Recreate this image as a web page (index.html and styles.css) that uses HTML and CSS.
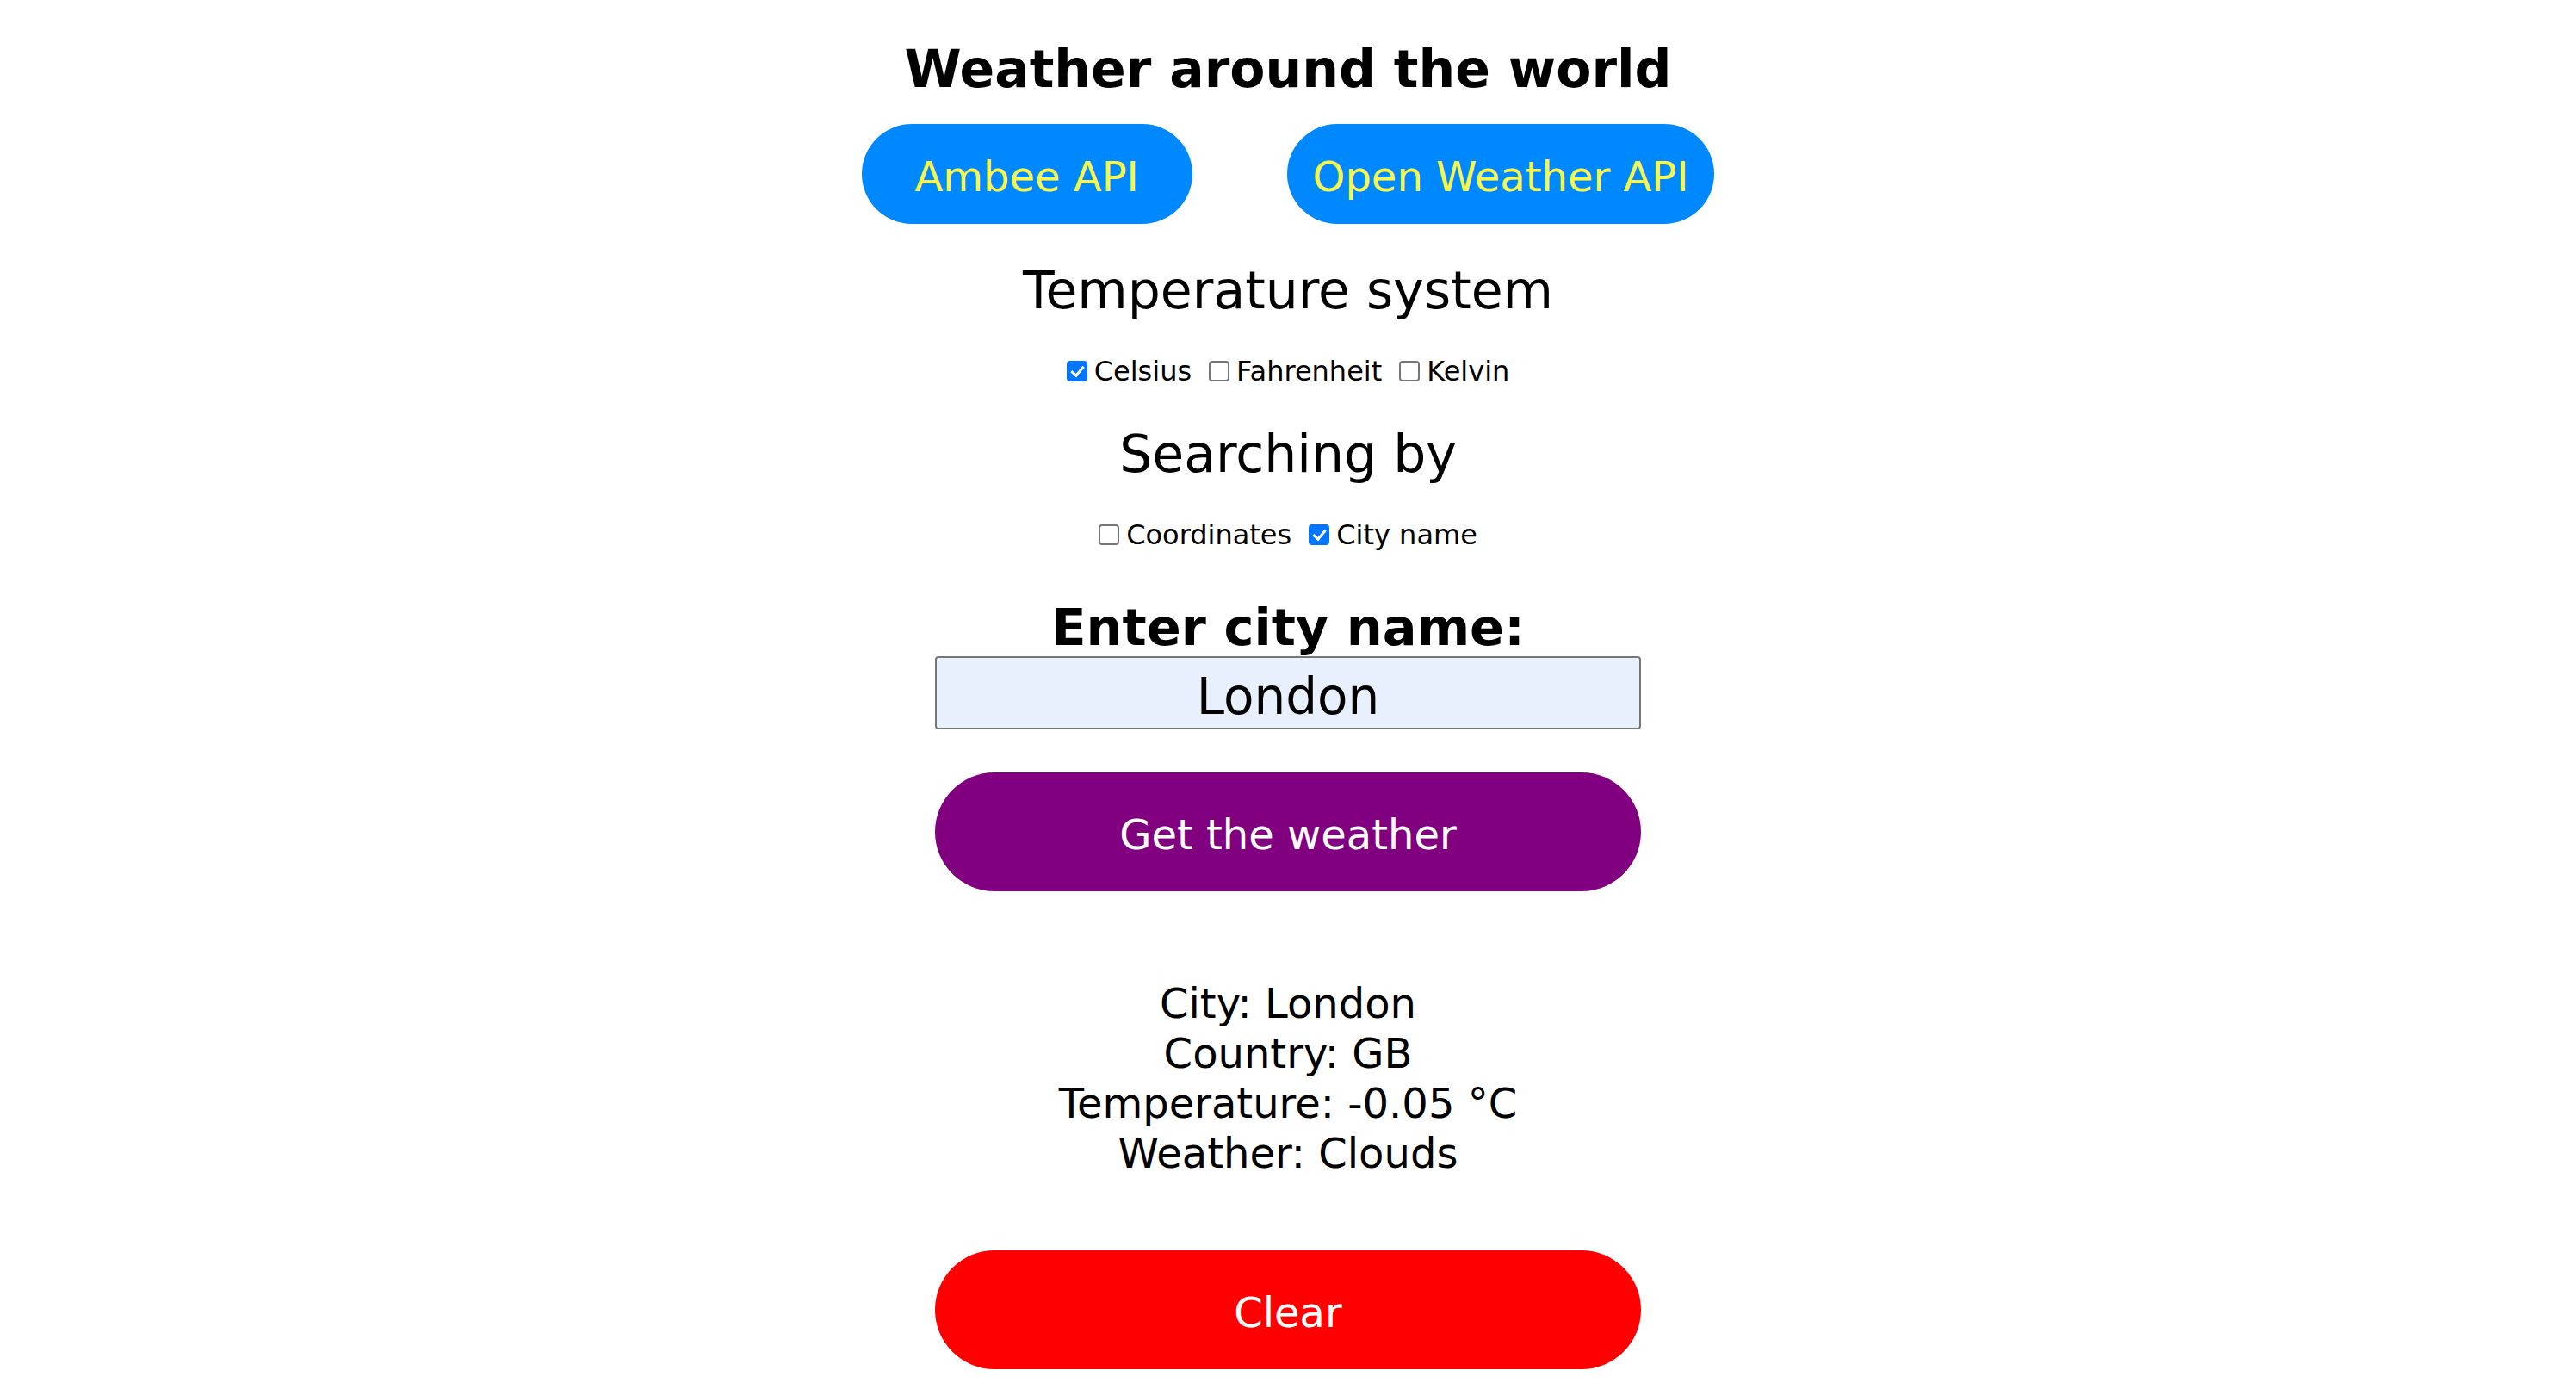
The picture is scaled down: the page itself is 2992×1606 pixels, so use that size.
FILE: index.html
```html
<!DOCTYPE html>
<html lang="en">
<head>
<meta charset="utf-8">
<title>Weather around the world</title>
<link rel="stylesheet" href="styles.css">
</head>
<body>
<main class="app">
  <h1 class="title">Weather around the world</h1>
  <div class="api-row">
    <button class="api-btn" type="button">Ambee API</button>
    <button class="api-btn" type="button">Open Weather API</button>
  </div>
  <h2 class="section-title">Temperature system</h2>
  <div class="options">
    <label class="option"><input type="checkbox" class="check" checked>Celsius</label>
    <label class="option"><input type="checkbox" class="check">Fahrenheit</label>
    <label class="option"><input type="checkbox" class="check">Kelvin</label>
  </div>
  <h2 class="section-title section-search">Searching by</h2>
  <div class="options">
    <label class="option"><input type="checkbox" class="check">Coordinates</label>
    <label class="option"><input type="checkbox" class="check" checked>City name</label>
  </div>
  <label class="field-label" for="city">Enter city name:</label>
  <input class="city-input" id="city" type="text" value="London">
  <button class="action-btn get-btn" type="button">Get the weather</button>
  <div class="results">
    <div>City: London</div>
    <div>Country: GB</div>
    <div>Temperature: -0.05 °C</div>
    <div>Weather: Clouds</div>
  </div>
  <button class="action-btn clear-btn" type="button">Clear</button>
</main>
</body>
</html>
```

FILE: styles.css
```css
html, body {
  margin: 0;
  padding: 0;
  background: #ffffff;
}

body {
  font-family: "DejaVu Sans", Verdana, sans-serif;
  color: #000000;
}

.app {
  display: flex;
  flex-direction: column;
  align-items: center;
  text-align: center;
}

.title {
  margin: 42px 0 0;
  font-size: 60px;
  font-weight: bold;
  line-height: 76px;
}

.api-row {
  margin-top: 26px;
  display: flex;
  gap: 110px;
}

.api-btn {
  box-sizing: border-box;
  height: 116px;
  min-width: 384px;
  padding: 33px 30px 27px;
  border: none;
  border-radius: 58px;
  background: #0088ff;
  color: #f8f84c;
  font-family: "DejaVu Sans", Verdana, sans-serif;
  font-size: 48px;
  line-height: 56px;
  cursor: pointer;
}

.section-title {
  margin: 41px 0 0;
  font-size: 60px;
  font-weight: normal;
  line-height: 72px;
}

.section-search {
  margin-top: 40px;
}

.options {
  margin-top: 38px;
  height: 40px;
  display: flex;
  align-items: center;
  gap: 20px;
  font-size: 32px;
  line-height: 40px;
}

.option {
  display: flex;
  align-items: center;
  gap: 8px;
}

.check {
  appearance: none;
  -webkit-appearance: none;
  position: relative;
  box-sizing: border-box;
  width: 24px;
  height: 24px;
  margin: 0;
  border: 2px solid #767676;
  border-radius: 4px;
  background: #ffffff;
}

.check:checked {
  border-color: #0075ff;
  background: #0075ff;
}

.check:checked::after {
  content: "";
  position: absolute;
  left: 6px;
  top: 1px;
  width: 6px;
  height: 12px;
  border-right: 3px solid #ffffff;
  border-bottom: 3px solid #ffffff;
  transform: rotate(40deg);
}

.field-label {
  margin-top: 55px;
  font-size: 59px;
  font-weight: bold;
  line-height: 66px;
}

.city-input {
  box-sizing: border-box;
  width: 820px;
  height: 85px;
  margin: 0;
  padding: 8px 4px 0;
  border: 2px solid #767676;
  border-radius: 4px;
  background: #e8f0fe;
  color: #000000;
  font-family: "DejaVu Sans", Verdana, sans-serif;
  font-size: 58px;
  text-align: center;
}

.action-btn {
  box-sizing: border-box;
  width: 820px;
  height: 138px;
  padding: 44px 0 38px;
  border: none;
  border-radius: 69px;
  color: #ffffff;
  font-family: "DejaVu Sans", Verdana, sans-serif;
  font-size: 48px;
  line-height: 56px;
  cursor: pointer;
}

.get-btn {
  margin-top: 50px;
  background: #800080;
}

.results {
  margin-top: 101px;
  font-size: 48px;
  line-height: 58px;
}

.clear-btn {
  margin-top: 84px;
  background: #ff0000;
}
```
